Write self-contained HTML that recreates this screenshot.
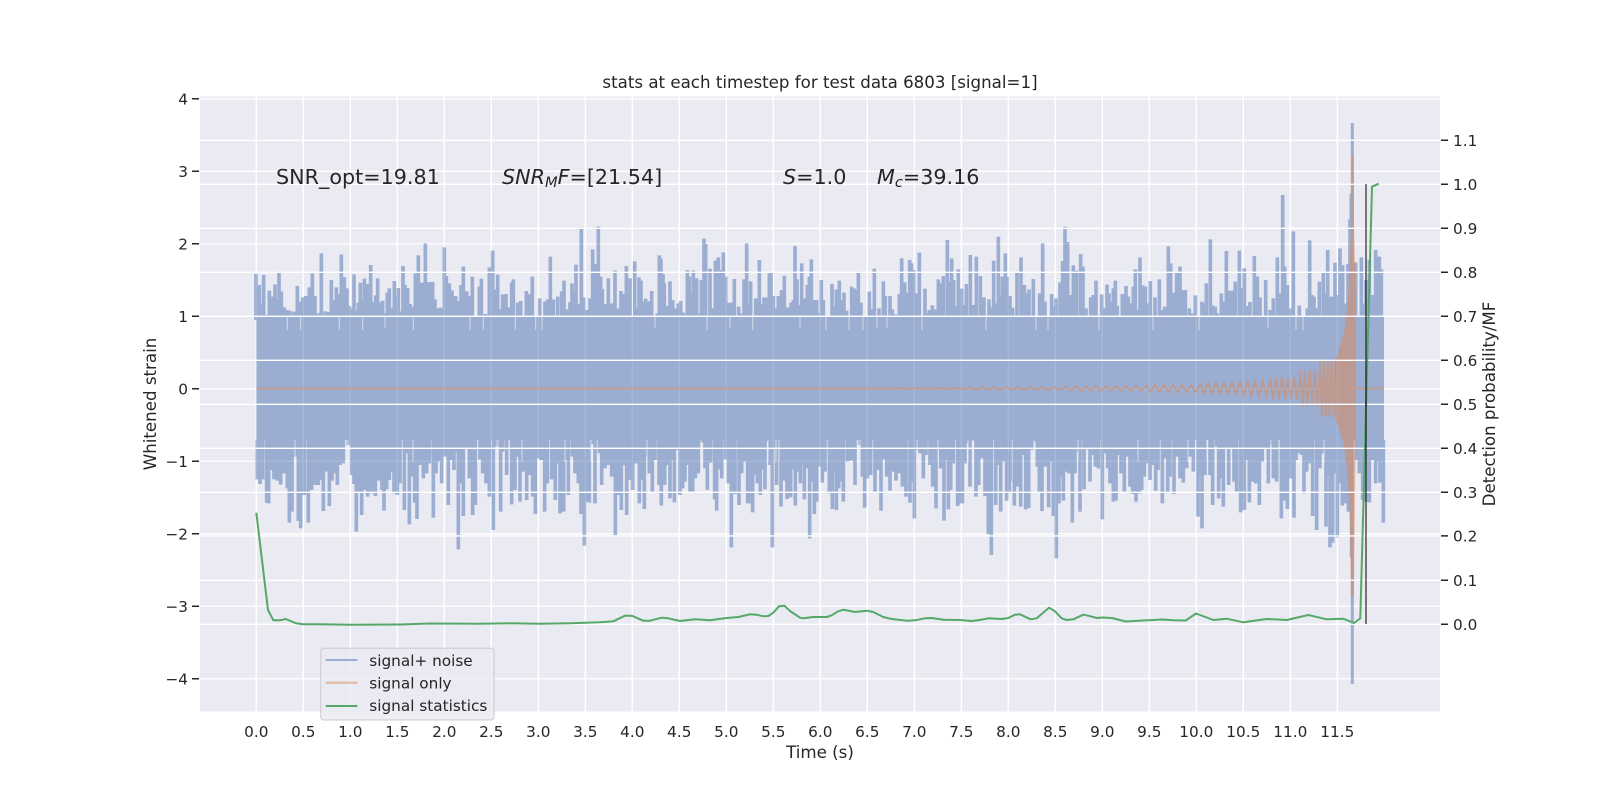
<!DOCTYPE html>
<html><head><meta charset="utf-8"><title>stats</title>
<style>html,body{margin:0;padding:0;background:#fff}svg{display:block}text{font-family:"DejaVu Sans",sans-serif;fill:#262626}</style></head>
<body>
<svg width="1600" height="800" viewBox="0 0 1600 800" xmlns="http://www.w3.org/2000/svg">
<rect width="1600" height="800" fill="#fff"/>
<rect x="200" y="96.5" width="1240" height="615" fill="#eaeaf2"/>
<g stroke="#fff" stroke-width="1.4" fill="none">
<path d="M256.3 96.5V711.5M303.3 96.5V711.5M350.3 96.5V711.5M397.3 96.5V711.5M444.3 96.5V711.5M491.3 96.5V711.5M538.3 96.5V711.5M585.3 96.5V711.5M632.3 96.5V711.5M679.3 96.5V711.5M726.3 96.5V711.5M773.3 96.5V711.5M820.3 96.5V711.5M867.3 96.5V711.5M914.3 96.5V711.5M961.3 96.5V711.5M1008.3 96.5V711.5M1055.3 96.5V711.5M1102.3 96.5V711.5M1149.3 96.5V711.5M1196.3 96.5V711.5M1243.3 96.5V711.5M1290.3 96.5V711.5M1337.3 96.5V711.5"/>
<path d="M200 98.8H1440M200 171.3H1440M200 243.8H1440M200 316.3H1440M200 388.8H1440M200 461.3H1440M200 533.8H1440M200 606.3H1440M200 678.8H1440"/>
</g>
<g opacity=".5">
<rect x="256.3" y="316" width="1127.7" height="124" fill="#4c72b0"/>
<g fill="none" stroke="#4c72b0" stroke-width="11">
<g transform="translate(250,220) scale(.33333)"><path d="M18 162V300M28 195V300M35 250V300M41 165V300M48 285V300M58 212V300M66 230V300M75 193V300M81 238V300M87 155V300M94 215V300M103 262V300M110 270V300M119 272V300M131 275V300M142 198V300M147 245V300M158 232V300M167 228V300M178 202V300M187 160V300M195 228V300M204 280V300M214 100V300M226 274V300M237 276V300M244 180V300M251 240V300M259 202V300M265 222V300M274 103V300M283 172V300M291 205V300M298 258V300M305 265V300M312 163V300M318 272V300M325 248V300M331 188V300M337 240V300M343 176V300M352 192V300M362 135V300M369 246V300M377 226V300M383 175V300M390 248V300M398 242V300M405 280V300M412 218V300M418 205V300M425 265V300M433 183V300M440 232V300M445 204V300M452 274V300M459 138V300M465 195V300M473 204V300M480 252V300M486 260V300M496 160V300M505 106V300M515 188V300M526 70V300M537 186V300M548 186V300M555 238V300M563 265V300M571 263V300M577 267V300M583 82V300M589 168V300M598 190V300M606 211V300M617 228V300M625 243V300M633 195V300M640 140V300M650 214V300M657 228V300M667 170V300M688 200V300M694 176V300M706 282V300M718 142V300M728 92V300M733 208V300M743 164V300M750 267V300M758 223V300M768 222V300M774 262V300M785 187V300M790 178V300M803 248V300M812 243V300M829 213V300M839 222V300M847 170V300M857 290V300M869 235V300M885 244V300M893 238V300M901 110V300M910 238V300M923 230V300M935 214V300M942 182V300M950 268V300M960 246V300M966 190V300M972 220V300M978 134V300M986 252V300M994 22V300M1001 232V300M1010 270V300M1020 235V300M1028 88V300M1035 132V300M1045 20V300M1052 170V300M1057 207V300M1067 252V300M1075 175V300M1084 250V300M1095 151V300M1103 265V300M1113 213V300M1122 222V300M1129 138V300M1136 222V300"/></g>
<g transform="translate(630,220) scale(.33333)"><path d="M0 175V300M14 124V300M20 263V300M27 172V300M33 182V300M39 245V300M47 236V300M55 244V300M65 213V300M82 280V300M88 106V300M93 116V300M99 162V300M103 190V300M110 258V300M120 184V300M128 240V300M134 265V300M140 268V300M145 250V300M152 243V300M160 278V300M172 150V300M178 170V300M183 218V300M190 152V300M194 218V300M200 175V300M207 280V300M214 180V300M222 56V300M227 72V300M240 146V300M246 265V300M256 122V300M265 112V300M272 150V300M280 97V300M287 170V300M297 248V300M305 248V300M313 177V300M320 290V300M326 260V300M332 280V300M342 178V300M350 70V300M356 255V300M362 184V300M377 235V300M388 120V300M395 252V300M402 232V300M408 232V300M418 160V300M423 158V300M430 228V300M437 265V300M445 228V300M455 210V300M463 167V300M472 262V300M483 248V300M490 240V300M495 78V300M501 178V300M508 255V300M515 130V300M523 235V300M532 195V300M538 170V300M544 118V300M552 240V300M560 240V300M568 280V300M574 180V300M580 240V300M606 192V300M613 260V300M619 208V300M628 182V300M635 240V300M642 218V300M650 272V300M665 200V300M672 205V300M677 210V300M685 155V300M693 248V300M718 215V300M725 268V300M733 146V300M747 265V300M760 184V300M766 228V300M780 228V300M787 268V300M796 283V300M808 222V300M815 115V300M824 187V300M833 218V300M839 120V300M845 130V300M851 150V300M860 220V300M868 98V300M885 206V300M892 280V300M898 270V300M907 256V300M916 268V300M925 178V300M930 190V300M940 168V300M952 60V300M958 185V300M965 115V300M971 180V300M977 258V300M985 148V300M995 206V300M1002 255V300M1009 192V300M1021 105V300M1028 255V300M1039 110V300M1051 168V300M1062 232V300M1077 238V300M1083 262V300M1091 122V300M1098 250V300M1105 50V300M1111 225V300M1117 170V300M1126 100V300M1131 170V300M1137 228V300"/></g>
<g transform="translate(1010,180) scale(.33333)"><path d="M0 348V420M8 383V420M21 278V420M33 232V420M43 315V420M50 340V420M57 328V420M70 297V420M89 340V420M98 190V420M105 365V420M125 342V420M133 380V420M138 355V420M150 307V420M158 243V420M165 140V420M173 186V420M182 345V420M190 256V420M196 322V420M200 272V420M212 222V420M219 260V420M228 385V420M242 352V420M250 345V420M258 302V420M275 343V420M285 385V420M291 314V420M297 340V420M303 365V420M310 325V420M316 302V420M322 378V420M337 342V420M348 318V420M355 350V420M362 370V420M370 320V420M376 268V420M383 390V420M390 232V420M398 316V420M406 320V420M412 370V420M421 303V420M435 352V420M448 298V420M455 390V420M464 380V420M475 199V420M482 250V420M492 338V420M500 275V420M510 260V420M520 330V420M526 330V420M538 385V420M546 400V420M556 346V420M576 365V420M582 370V420M589 310V420M601 178V420M608 376V420M616 380V420M622 400V420M634 340V420M642 365V420M649 213V420M660 332V420M668 332V420M676 305V420M688 212V420M695 325V420M703 265V420M712 378V420M720 366V420M733 228V420M742 290V420M750 352V420M767 300V420M780 390V420M790 355V420M802 232V420M810 340V420M818 45V420M824 260V420M832 315V420M840 385V420M850 154V420M868 377V420M892 385V420M899 181V420M906 345V420M912 350V420M920 385V420M928 305V420M940 278V420M946 340V420M953 210V420M964 350V420M975 248V420M983 345V420M990 205V420M998 255V420M1005 370V420M1014 252V420M1020 118V420M1024 40V420M1037 247V420M1054 232V420M1060 370V420M1068 300V420M1078 240V420M1088 345V420M1097 210V420M1102 305V420M1108 230V420M1114 268V420"/></g>
<g transform="translate(250,440) scale(.33333)"><path d="M22 118V0M30 132V0M38 118V0M50 188V0M56 190V0M65 90V0M72 118V0M82 122V0M92 134V0M102 100V0M112 145V0M118 248V0M126 215V0M134 50V0M145 243V0M152 265V0M163 165V0M175 248V0M185 150V0M195 135V0M205 135V0M212 120V0M220 213V0M228 95V0M238 198V0M246 122V0M255 100V0M262 135V0M270 75V0M280 70V0M295 15V0M305 105V0M312 132V0M319 275V0M327 155V0M335 225V0M345 150V0M353 170V0M360 155V0M368 160V0M376 168V0M386 122V0M396 150V0M402 212V0M410 148V0M418 120V0M426 95V0M432 160V0M442 165V0M450 130V0M463 210V0M470 40V0M478 253V0M485 110V0M494 188V0M501 237V0M510 75V0M520 115V0M530 100V0M538 70V0M550 233V0M558 100V0M565 65V0M575 130V0M585 50V0M595 195V0M605 60V0M612 90V0M620 35V0M625 328V0M632 130V0M640 228V0M650 25V0M658 115V0M668 225V0M676 195V0M690 58V0M698 100V0M708 130V0M718 170V0M730 270V0M740 20V0M752 215V0M758 35V0M770 105V0M785 193V0M795 150V0M803 50V0M810 185V0M820 95V0M830 180V0M838 105V0M848 170V0M856 222V0M864 55V0M873 60V0M884 215V0M892 130V0M905 118V0M916 180V0M923 70V0M930 220V0M941 215V0M950 60V0M955 165V0M967 50V0M975 100V0M985 130V0M993 222V0M1003 317V0M1010 185V0M1018 188V0M1025 12V0M1035 190V0M1048 40V0M1055 135V0M1065 85V0M1075 75V0M1085 110V0M1096 287V0M1103 165V0M1114 210V0M1120 75V0M1130 225V0M1138 120V0"/></g>
<g transform="translate(630,440) scale(.33333)"><path d="M0 95V0M8 150V0M17 70V0M28 190V0M35 120V0M43 207V0M50 50V0M58 100V0M67 158V0M75 60V0M87 135V0M94 197V0M104 135V0M112 75V0M120 175V0M127 60V0M133 187V0M139 30V0M150 165V0M158 145V0M165 125V0M172 75V0M180 155V0M188 155V0M196 115V0M205 100V0M214 8V0M225 85V0M232 150V0M242 68V0M254 178V0M260 212V0M267 88V0M275 115V0M287 58V0M295 130V0M304 322V0M315 162V0M327 195V0M335 100V0M345 65V0M353 190V0M360 190V0M368 217V0M375 105V0M382 130V0M391 165V0M398 88V0M405 148V0M413 5V0M420 75V0M427 322V0M437 25V0M440 135V0M447 30V0M453 200V0M464 122V0M471 177V0M478 145V0M482 172V0M488 88V0M496 197V0M503 95V0M511 130V0M517 70V0M523 178V0M533 85V0M539 295V0M545 125V0M553 222V0M560 185V0M568 80V0M577 128V0M585 95V0M598 160V0M607 207V0M612 98V0M619 210V0M626 145V0M633 125V0M640 185V0M652 65V0M660 62V0M667 62V0M675 135V0M690 15V0M697 110V0M704 203V0M712 115V0M722 105V0M735 158V0M744 90V0M753 212V0M760 58V0M770 110V0M780 152V0M790 95V0M798 122V0M807 100V0M817 140V0M828 170V0M840 188V0M848 125V0M853 235V0M860 30V0M870 40V0M880 115V0M888 45V0M900 75V0M908 140V0M918 205V0M924 22V0M932 85V0M942 242V0M950 60V0M955 208V0M962 150V0M970 70V0M983 198V0M990 190V0M997 190V0M1005 70V0M1015 10V0M1020 140V0M1028 2V0M1038 170V0M1046 135V0M1056 55V0M1065 168V0M1075 282V0M1084 345V0M1097 195V0M1103 75V0M1112 215V0M1120 65V0M1130 182V0M1138 155V0"/></g>
<g transform="translate(1010,440) scale(.33333)"><path d="M0 125V0M13 197V0M22 140V0M32 200V0M40 45V0M47 208V0M56 204V0M65 30V0M72 5V0M82 80V0M88 155V0M96 213V0M105 80V0M116 202V0M123 65V0M130 228V0M139 355V0M147 190V0M155 110V0M160 182V0M168 95V0M176 100V0M187 248V0M195 100V0M203 35V0M210 215V0M222 148V0M232 28V0M240 125V0M248 45V0M256 80V0M265 85V0M277 238V0M285 40V0M293 85V0M300 130V0M310 185V0M318 182V0M325 45V0M333 100V0M343 155V0M352 50V0M360 140V0M368 162V0M378 185V0M388 160V0M395 150V0M403 110V0M413 70V0M420 120V0M427 75V0M437 152V0M444 90V0M457 190V0M465 55V0M473 155V0M480 110V0M492 162V0M500 50V0M510 115V0M520 128V0M530 85V0M540 50V0M550 95V0M564 230V0M568 105V0M576 265V0M585 105V0M600 105V0M608 195V0M620 20V0M626 175V0M633 115V0M640 200V0M648 25V0M656 135V0M664 25V0M672 125V0M680 155V0M692 217V0M703 210V0M710 60V0M718 187V0M726 125V0M737 130V0M748 195V0M757 65V0M768 25V0M775 130V0M782 15V0M790 115V0M800 125V0M814 235V0M825 182V0M832 207V0M842 115V0M852 233V0M858 60V0M868 40V0M875 45V0M882 160V0M890 95V0M898 70V0M908 228V0M920 270V0M930 85V0M938 40V0M948 260V0M953 108V0M960 322V0M968 308V0M975 100V0M982 292V0M990 130V0M997 197V0M1005 190V0M1015 215V0M1025 352V0M1040 60V0M1048 100V0M1058 180V0M1068 185V0M1078 187V0M1088 60V0M1097 130V0M1103 65V0M1110 128V0M1120 248V0"/></g>
</g>
<path d="M1352.3 123V684" fill="none" stroke="#4c72b0" stroke-width="3"/>
</g>
<path fill="none" stroke="#eaeaf2" stroke-width="1" stroke-opacity=".75" d="M287.3 316V330M300.7 316V330M339.3 316V330M362.7 316V330M385 316V328M413.3 316V330M470 316V330M483.3 316V330M515.3 316V330M535.7 316V330M542 316V330M655 316V328M707 316V330M730 316V328M752.7 316V330M800 316V328M826 316V330M849 316V330M863 316V330M877 316V328M887 316V328M922 316V330M986 316V330M1036 316V330M1048 316V330M1099 316V330M1153 316V330M1199 316V330M1268 316V328M1296 316V330M1303 316V330M295 440V462M348 440V462M413 440V462M497 440V462M522 440V462M565 440V462M591 440V462M647 440V462M701 440V462M768 440V462M776 440V462M779 440V462M860 440V462M917 440V462M938 440V462M968 440V462M973 440V462M1034 440V462M1078 440V462M1138 440V462M1188 440V462M1207 440V462M1271 440V462M1324 440V462"/>
<g opacity=".5" fill="none" stroke="#dd8452" stroke-width="2">
<path d="M256.3 388.5H900M1355 388.5H1384"/>
<path d="M900 387.9l7 1.2 7-1.2 7 1.2 7-1.2 7 1.2 7-1.2 7 1.2 7-1.2 7 1.2 7-1.2M970 387.3l6 2.4 6-2.4 6 2.4 6-2.4 6 2.4 6-2.4 6 2.4 6-2.4 6 2.4 6-2.4 6 2.4 6-2.4 6 2.4 6-2.4 6 2.4 6-2.4M1066 386.3l5 4.4 5-4.4 5 4.4 5-4.4 5 4.4 5-4.4 5 4.4 5-4.4 5 4.4 5-4.4 5 4.4 5-4.4 5 4.4 5-4.4 5 4.4 5-4.4M1146 385l4.5 7 4.5-7 4.5 7 4.5-7 4.5 7 4.5-7 4.5 7 4.5-7 4.5 7 4.5-7 4.5 7 4.5-7M1200 383.5l4 10 4-10 4 10 4-10 4 10 4-10 4 10 4-10 4 10 4-10M1240 381.5l3.75 14 3.75-14 3.75 14 3.75-14 3.75 14 3.75-14 3.75 14 3.75-14M1270 377.5l3 22 3-22 3 22 3-22 3 22 3-22 3 22 3-22 3 22 3-22M1300 370.5l2.5 36 2.5-36 2.5 36 2.5-36 2.5 36 2.5-36 2.5 36 2.5-36M1320 360.5l1.9 56 1.9-56 1.9 56 1.9-56 1.9 56 1.9-56 1.9 56 1.9-56"/>
</g>
<path opacity=".5" fill="#dd8452" d="M1335 360L1337 356L1339 350L1342 340L1345 327L1348 300L1350 260L1351 230L1352 154L1353.5 154L1354 220L1355.7 300V460L1355 490L1354 597H1351L1350 527L1348 483L1346 460L1343 441L1339 428L1335 418Z"/>
<path fill="none" stroke="#fff" stroke-width="1.4" d="M200 140.3H1440M200 184.3H1440M200 228.3H1440M200 272.3H1440M200 316.3H1440M200 360.3H1440M200 404.3H1440M200 448.3H1440M200 492.3H1440M200 535.9H1440M200 580.3H1440M200 624.3H1440"/>
<path fill="none" stroke="#55a868" stroke-width="2" stroke-linejoin="round" d="M256.3 512.7L268 610L273.3 620.3L280 620.3L285.7 619L296 623.3L303 624.3L320 624.3L350 624.7L400 624.5L430 623.5L480 623.8L510 623.3L540 623.7L570 623.3L600 622.3L613.3 621.3L625 615.7L631.7 615.7L643.3 620.7L650 620.7L661.7 617.7L668.3 618.3L680 621L695 619.3L710 620.3L726.7 618L738.3 617L750 614.3L756.7 614.7L763.3 616.3L768.3 616L773.3 612.7L779 606.3L784.3 605.7L790 611L800 617.7L803.3 618.3L813.3 617L826.7 617L831.7 615.3L837.3 611.7L843.3 609.7L855 612L866.7 610.7L873.3 612L883.3 617L891.7 619L906.7 620.7L915 620.3L925 618.3L931.7 618L943.3 619.7L960 620L971.7 621L980 620L988.3 618.3L1001.7 619L1008.3 618L1015 614.7L1020 614.3L1030.7 619.3L1036.7 618.3L1049 607.7L1055 611.3L1061.7 618.3L1066.7 620L1073.3 619.3L1083.3 614.7L1088.3 615.7L1096.7 618L1102 617.5L1112 618L1125.5 621.5L1143 620.5L1163 619.5L1173.5 620.3L1185.7 620.5L1196 613.5L1200 615L1213.3 620L1226.7 618.7L1243.3 622.3L1266.7 619L1286.7 620L1308.3 615L1326.7 619.3L1343.3 618.7L1354 623L1360.3 618.3L1372 186.7L1378.7 183.7"/>
<path fill="none" stroke="#000" stroke-opacity=".5" stroke-width="2" d="M1366 184V624"/>
<path fill="none" stroke="#262626" stroke-width="1.5" d="M192 98.8H199M192 171.3H199M192 243.8H199M192 316.3H199M192 388.8H199M192 461.3H199M192 533.8H199M192 606.3H199M192 678.8H199M1441 140.3H1448M1441 184.3H1448M1441 228.3H1448M1441 272.3H1448M1441 316.3H1448M1441 360.3H1448M1441 404.3H1448M1441 448.3H1448M1441 492.3H1448M1441 535.9H1448M1441 580.3H1448M1441 624.3H1448"/>
<g font-size="15.28" text-anchor="end">
<text x="188" y="104.3">4</text><text x="188" y="176.8">3</text><text x="188" y="249.3">2</text><text x="188" y="321.8">1</text><text x="188" y="394.3">0</text><text x="188" y="466.8">−1</text><text x="188" y="539.3">−2</text><text x="188" y="611.8">−3</text><text x="188" y="684.3">−4</text>
</g>
<g font-size="15.28">
<text x="1453" y="145.8">1.1</text><text x="1453" y="189.8">1.0</text><text x="1453" y="233.8">0.9</text><text x="1453" y="277.8">0.8</text><text x="1453" y="321.8">0.7</text><text x="1453" y="365.8">0.6</text><text x="1453" y="409.8">0.5</text><text x="1453" y="453.8">0.4</text><text x="1453" y="497.8">0.3</text><text x="1453" y="541.4">0.2</text><text x="1453" y="585.8">0.1</text><text x="1453" y="629.8">0.0</text>
</g>
<g font-size="15.28" text-anchor="middle">
<text x="256.3" y="737">0.0</text><text x="303.3" y="737">0.5</text><text x="350.3" y="737">1.0</text><text x="397.3" y="737">1.5</text><text x="444.3" y="737">2.0</text><text x="491.3" y="737">2.5</text><text x="538.3" y="737">3.0</text><text x="585.3" y="737">3.5</text><text x="632.3" y="737">4.0</text><text x="679.3" y="737">4.5</text><text x="726.3" y="737">5.0</text><text x="773.3" y="737">5.5</text><text x="820.3" y="737">6.0</text><text x="867.3" y="737">6.5</text><text x="914.3" y="737">7.0</text><text x="961.3" y="737">7.5</text><text x="1008.3" y="737">8.0</text><text x="1055.3" y="737">8.5</text><text x="1102.3" y="737">9.0</text><text x="1149.3" y="737">9.5</text><text x="1196.3" y="737">10.0</text><text x="1243.3" y="737">10.5</text><text x="1290.3" y="737">11.0</text><text x="1337.3" y="737">11.5</text>
</g>
<text x="820" y="88" font-size="16.67" text-anchor="middle">stats at each timestep for test data 6803 [signal=1]</text>
<text x="820" y="758" font-size="16.67" text-anchor="middle">Time (s)</text>
<text transform="translate(156,404) rotate(-90)" font-size="16.67" text-anchor="middle">Whitened strain</text>
<text transform="translate(1495,404) rotate(-90)" font-size="16.67" text-anchor="middle">Detection probability/MF</text>
<g font-size="20.7">
<text x="276" y="184">SNR_opt=19.81</text>
<text x="502" y="184"><tspan font-style="italic">SNR</tspan><tspan font-style="italic" font-size="14.6" dy="3">M</tspan><tspan font-style="italic" dy="-3">F</tspan>=[21.54]</text>
<text x="783" y="184"><tspan font-style="italic">S</tspan>=1.0</text>
<text x="877" y="184"><tspan font-style="italic">M</tspan><tspan font-style="italic" font-size="14.6" dy="3">c</tspan><tspan dy="-3">=39.16</tspan></text>
</g>
<rect x="320.7" y="648.3" width="173.3" height="71.7" rx="3" fill="#eaeaf2" fill-opacity=".8" stroke="#ccc" stroke-opacity=".8" stroke-width="1.3"/>
<path d="M325.7 660H357.3" stroke="#4c72b0" stroke-opacity=".5" stroke-width="2"/>
<path d="M325.7 682.7H357.3" stroke="#dd8452" stroke-opacity=".5" stroke-width="2"/>
<path d="M325.7 706H357.3" stroke="#55a868" stroke-width="2"/>
<g font-size="15.28">
<text x="369.3" y="666">signal+ noise</text>
<text x="369.3" y="688.5">signal only</text>
<text x="369.3" y="711">signal statistics</text>
</g>
</svg>
</body></html>
